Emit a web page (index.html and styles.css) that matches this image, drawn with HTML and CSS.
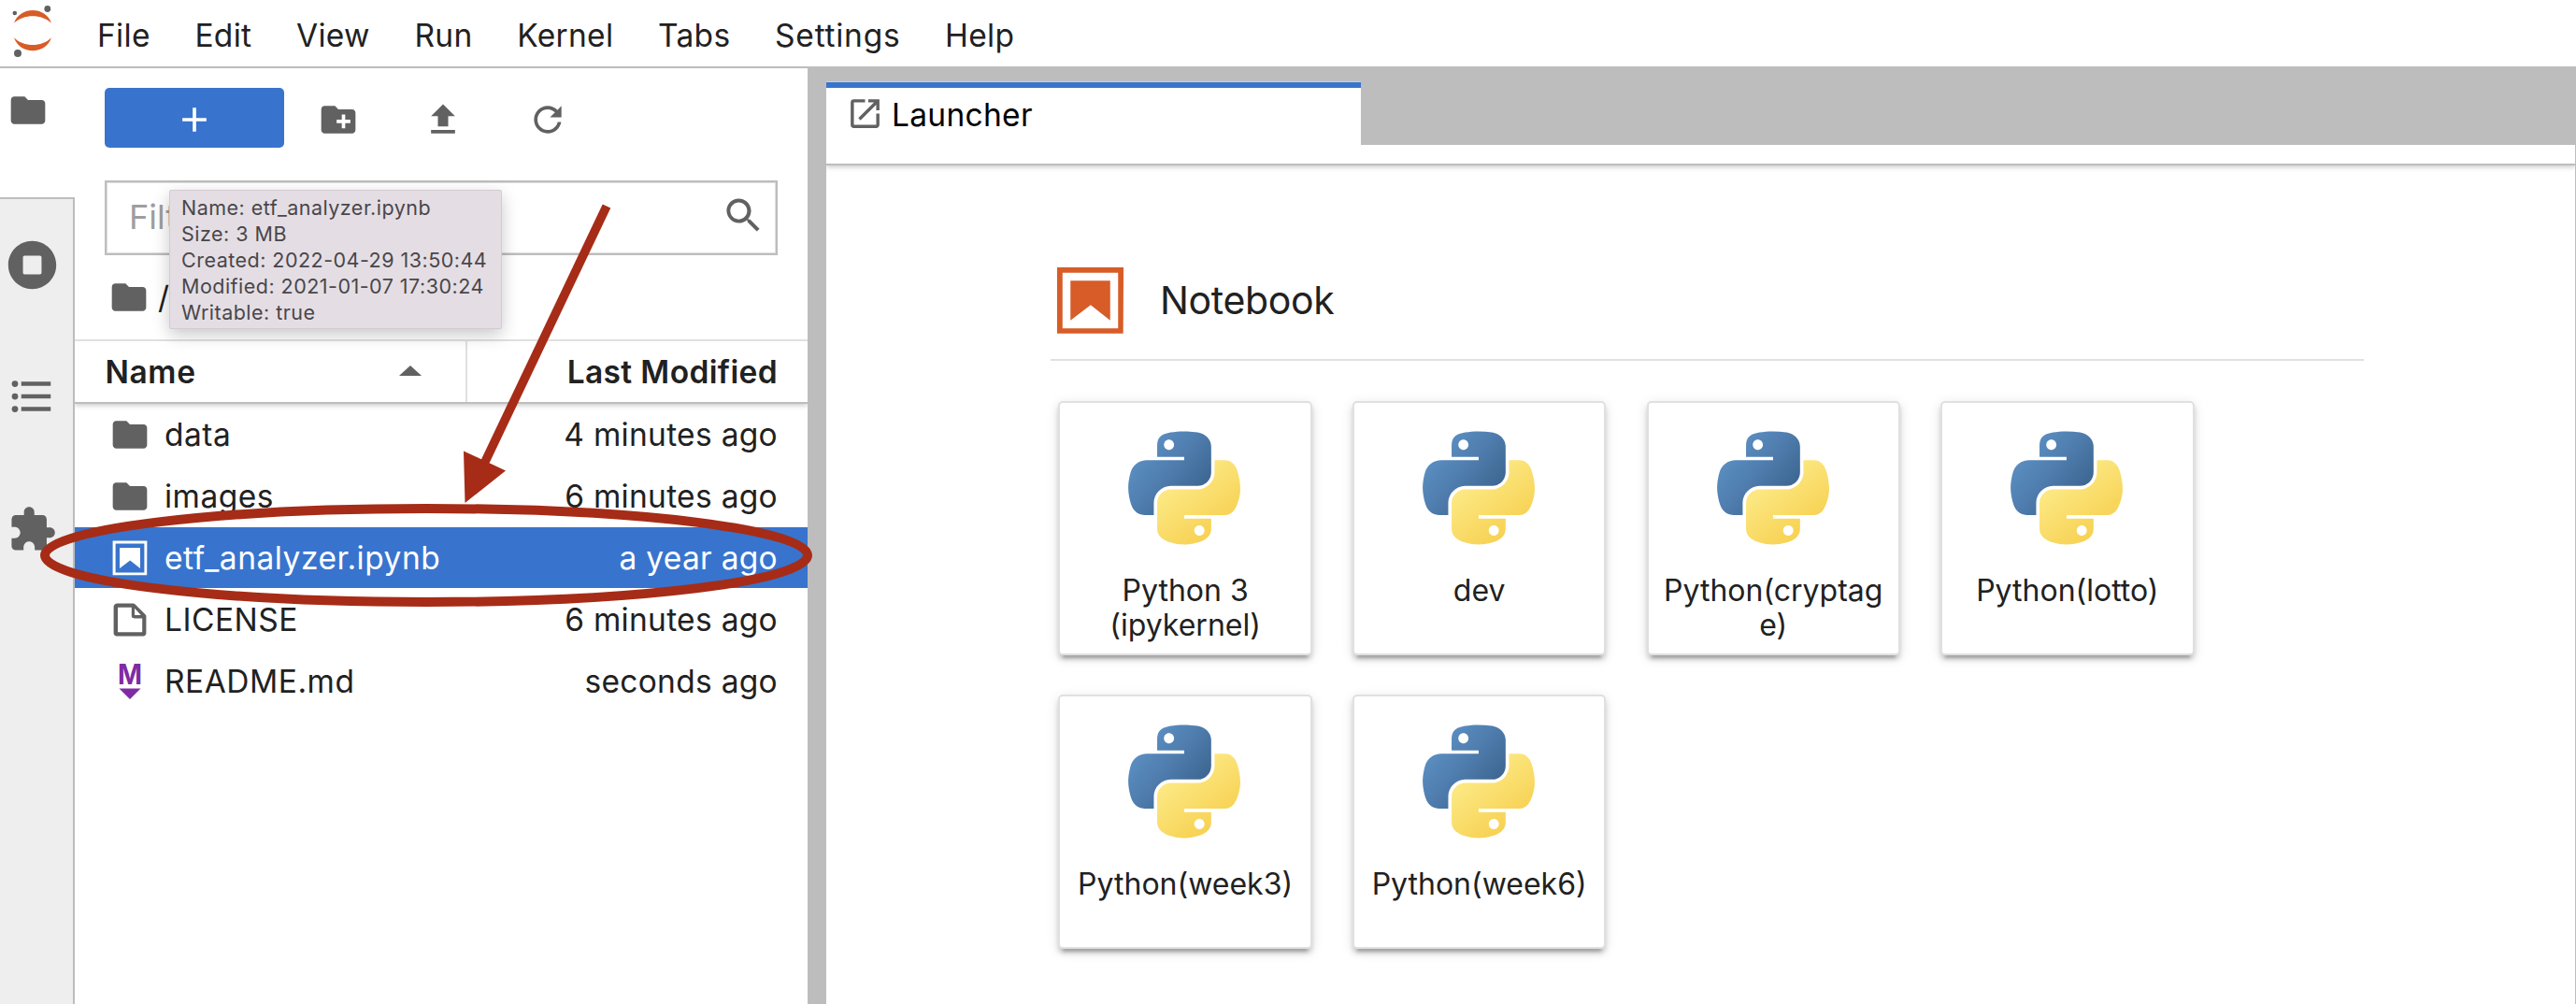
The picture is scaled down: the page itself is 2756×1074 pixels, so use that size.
FILE: index.html
```html
<!DOCTYPE html>
<html lang="en">
<head>
<meta charset="utf-8">
<title>JupyterLab</title>
<link rel="stylesheet" href="styles.css">
</head>
<body>
<svg class="defs" width="0" height="0" aria-hidden="true">
  <defs>
    <linearGradient id="py-blue" gradientUnits="userSpaceOnUse" x1="12" y1="18" x2="78" y2="74"><stop offset="0" stop-color="#5f94c8"/><stop offset=".5" stop-color="#4f7dae"/><stop offset="1" stop-color="#3b638d"/></linearGradient>
    <linearGradient id="py-yellow" gradientUnits="userSpaceOnUse" x1="48" y1="62" x2="86" y2="112"><stop offset="0" stop-color="#fce883"/><stop offset="1" stop-color="#f7d152"/></linearGradient>
    <symbol id="folder" viewBox="0 0 24 24"><path d="M10 4H4c-1.1 0-1.99.9-1.99 2L2 18c0 1.1.9 2 2 2h16c1.1 0 2-.9 2-2V8c0-1.1-.9-2-2-2h-8l-2-2z"/></symbol>
    <symbol id="notebook" viewBox="0 0 22 22"><path d="M18.7 3.3v15.4H3.3V3.3h15.4m1.5-1.5H1.8v18.3h18.3l.1-18.3z"/><path d="M16.5 16.5l-5.4-4.3-5.6 4.3v-11h11z"/></symbol>
    <symbol id="python" viewBox="5.5 6.4 111.3 112.4"><path fill="url(#py-blue)" d="M60.51 6.398C55.93 6.419 51.55 6.81 47.7 7.492 36.35 9.496 34.29 13.69 34.29 21.43v10.22h26.81v3.406H24.23c-7.79 0-14.62 4.684-16.75 13.59-2.46 10.21-2.57 16.59 0 27.25 1.91 7.938 6.46 13.59 14.25 13.59h9.22v-12.25c0-8.85 7.66-16.66 16.75-16.66h26.78c7.46 0 13.41-6.14 13.41-13.62V21.43c0-7.266-6.13-12.72-13.41-13.94-4.6-.767-9.38-1.115-13.97-1.094zM46.01 14.62c2.77 0 5.03 2.298 5.03 5.125 0 2.816-2.26 5.094-5.03 5.094-2.78 0-5.03-2.278-5.03-5.094 0-2.827 2.25-5.125 5.03-5.125z"/><path fill="url(#py-yellow)" d="M91.23 35.05v11.91c0 9.23-7.83 17-16.75 17H47.7c-7.34 0-13.41 6.28-13.41 13.63v25.53c0 7.266 6.32 11.54 13.41 13.62 8.49 2.496 16.63 2.947 26.78 0 6.75-1.954 13.41-5.887 13.41-13.62V92.9H61.1v-3.406h40.19c7.79 0 10.7-5.436 13.41-13.59 2.8-8.399 2.68-16.48 0-27.25-1.93-7.757-5.6-13.59-13.41-13.59zM76.17 99.71c2.78 0 5.03 2.278 5.03 5.094 0 2.826-2.25 5.125-5.03 5.125-2.77 0-5.03-2.299-5.03-5.125 0-2.816 2.26-5.094 5.03-5.094z"/></symbol>
  </defs>
</svg>

<header class="menubar">
  <svg class="logo" viewBox="0 0 70 70"><g fill="#d75c27"><path d="M15 24.8C21 6.4 49 6.4 55 24.8 45 14.6 25 14.6 15 24.8z"/><path d="M15 40.2C21 58.8 49 58.8 55 40.2 45 50.6 25 50.6 15 40.2z"/></g><g fill="#616161"><circle cx="50.8" cy="9.5" r="3.4"/><circle cx="15.8" cy="14" r="2.3"/><circle cx="19" cy="57" r="4"/></g></svg>
  <nav class="menus">
    <span>File</span><span>Edit</span><span>View</span><span>Run</span><span>Kernel</span><span>Tabs</span><span class="wide">Settings</span><span>Help</span>
  </nav>
</header>

<div class="workspace">
  <aside class="activity">
    <div class="act act-current"><svg viewBox="0 0 24 24" class="i44"><use href="#folder"/></svg></div>
    <div class="act act-rest">
      <svg class="i-stop" viewBox="0 0 512 512"><path d="M256 8C119 8 8 119 8 256s111 248 248 248 248-111 248-248S393 8 256 8zm96 328c0 8.800-7.200 16-16 16H176c-8.800 0-16-7.200-16-16V176c0-8.800 7.200-16 16-16h160c8.800 0 16 7.200 16 16v160z"/></svg>
      <svg class="i-toc" viewBox="0 0 24 24"><path d="M7 5h14v2H7zM7 11h14v2H7zM7 17h14v2H7z"/><circle cx="4" cy="6" r="1.5"/><circle cx="4" cy="12" r="1.500"/><circle cx="4" cy="18" r="1.500"/></svg>
      <svg class="i-ext" viewBox="0 0 24 24"><path d="M20.500 11H19V7c0-1.100-.9-2-2-2h-4V3.500C13 2.120 11.880 1 10.500 1S8 2.120 8 3.500V5H4c-1.100 0-1.990.9-1.990 2v3.800H3.500c1.490 0 2.700 1.210 2.700 2.700s-1.210 2.700-2.700 2.700H2V20c0 1.100.9 2 2 2h3.800v-1.500c0-1.490 1.210-2.700 2.700-2.700 1.490 0 2.700 1.210 2.700 2.700V22H17c1.100 0 2-.9 2-2v-4h1.500c1.380 0 2.500-1.120 2.500-2.500S21.880 11 20.500 11z"/></svg>
    </div>
  </aside>

  <section class="browser">
    <div class="toolbar">
      <button class="new"><svg class="i44" viewBox="0 0 24 24"><path fill="#fff" d="M19 13h-6v6h-2v-6H5v-2h6V5h2v6h6v2z"/></svg></button>
      <svg class="i44" viewBox="0 0 24 24"><path d="M20 6h-8l-2-2H4c-1.110 0-1.990.89-1.990 2L2 18c0 1.110.89 2 2 2h16c1.110 0 2-.89 2-2V8c0-1.110-.89-2-2-2zm-1 8h-3v3h-2v-3h-3v-2h3V9h2v3h3v2z"/></svg>
      <svg class="i44" viewBox="0 0 24 24"><path d="M9 16h6v-6h4l-7-7-7 7h4zm-4 2h14v2H5z"/></svg>
      <svg class="i44" viewBox="0 0 18 18"><path d="M9 13.500c-2.490 0-4.500-2.010-4.500-4.500S6.510 4.500 9 4.500c1.240 0 2.360.52 3.170 1.330L10 8h5V3l-1.760 1.760C12.150 3.680 10.660 3 9 3 5.690 3 3.010 5.690 3.010 9S5.690 15 9 15c2.970 0 5.430-2.160 5.900-5h-1.520c-.46 2-2.240 3.500-4.380 3.500z"/></svg>
    </div>
    <div class="filter"><span>Filt</span>
      <svg class="i44" viewBox="0 0 18 18"><path d="M12.100 10.900h-.7l-.2-.2c.8-.9 1.300-2.200 1.300-3.500 0-3-2.400-5.400-5.400-5.400S1.800 4.200 1.800 7.100s2.400 5.400 5.400 5.400c1.300 0 2.500-.5 3.500-1.300l.2.2v.7l4.100 4.100 1.200-1.200-4.100-4.100zm-5 0c-2.100 0-3.700-1.700-3.700-3.700s1.700-3.700 3.700-3.700 3.700 1.700 3.700 3.700-1.600 3.700-3.700 3.700z"/></svg>
    </div>
    <div class="crumbs"><svg class="i44" viewBox="0 0 24 24"><use href="#folder"/></svg><span>/</span></div>
    <div class="thead">
      <div class="th-name">Name<svg viewBox="0 0 24 11"><path d="M0 11 12 0l12 11z"/></svg></div>
      <div class="th-date">Last Modified</div>
    </div>
    <div class="rows">
      <div class="row"><svg class="i44" viewBox="0 0 24 24"><use href="#folder"/></svg><span class="name">data</span><span class="date">4 minutes ago</span></div>
      <div class="row"><svg class="i44" viewBox="0 0 24 24"><use href="#folder"/></svg><span class="name">images</span><span class="date">6 minutes ago</span></div>
      <div class="row selected"><svg class="i44" viewBox="0 0 22 22"><use href="#notebook"/></svg><span class="name">etf_analyzer.ipynb</span><span class="date">a year ago</span></div>
      <div class="row"><svg class="i44" viewBox="0 0 22 22"><path d="M19.300 8.200l-5.500-5.500c-.3-.3-.7-.5-1.200-.5H3.900c-.8.1-1.600.9-1.600 1.800v14.100c0 .9.7 1.600 1.600 1.600h14.200c.9 0 1.600-.7 1.600-1.600V9.400c.1-.5-.1-.9-.4-1.200zm-5.800-3.300l3.400 3.600h-3.400V4.900zm3.900 12.700H4.700c-.1 0-.2 0-.2-.2V4.700c0-.2.1-.3.2-.3h7.200v4.400s0 .8.3 1.100c.3.3 1.100.3 1.100.3h4.300v7.200s-.1.2-.2.2z"/></svg><span class="name">LICENSE</span><span class="date">6 minutes ago</span></div>
      <div class="row"><svg class="i44 md" viewBox="0 0 44 44"><text x="22" y="24.500" text-anchor="middle" textLength="26" lengthAdjust="spacingAndGlyphs">M</text><path d="M10.500 29.500h23L22 41z"/></svg><span class="name">README.md</span><span class="date">seconds ago</span></div>
    </div>
  </section>

  <main class="dock">
    <div class="tabbar"><div class="tab"><svg viewBox="0 0 24 24"><path d="M19 19H5V5h7V3H5a2 2 0 00-2 2v14a2 2 0 002 2h14c1.100 0 2-.9 2-2v-7h-2v7zM14 3v2h3.590l-9.830 9.830 1.410 1.410L19 6.410V10h2V3h-7z"/></svg>Launcher</div></div>
    <div class="tabline"></div>
    <div class="launcher">
      <h2><svg viewBox="0 0 22 22"><use href="#notebook"/></svg>Notebook</h2>
      <div class="cards">
        <div class="card"><svg viewBox="0 0 120 122"><use href="#python"/></svg><p>Python 3 (ipykernel)</p></div>
        <div class="card"><svg viewBox="0 0 120 122"><use href="#python"/></svg><p>dev</p></div>
        <div class="card"><svg viewBox="0 0 120 122"><use href="#python"/></svg><p>Python(cryptage)</p></div>
        <div class="card"><svg viewBox="0 0 120 122"><use href="#python"/></svg><p>Python(lotto)</p></div>
        <div class="card"><svg viewBox="0 0 120 122"><use href="#python"/></svg><p>Python(week3)</p></div>
        <div class="card"><svg viewBox="0 0 120 122"><use href="#python"/></svg><p>Python(week6)</p></div>
      </div>
    </div>
  </main>
</div>

<div class="tooltip">Name: etf_analyzer.ipynb<br>Size: 3 MB<br>Created: 2022-04-29 13:50:44<br>Modified: 2021-01-07 17:30:24<br>Writable: true</div>

<svg class="annotation" viewBox="0 0 900 680">
  <ellipse cx="456" cy="594" rx="408" ry="50" fill="none" stroke="#a62c17" stroke-width="10"/>
  <path d="M649 220.500 518 496" stroke="#a62c17" stroke-width="9.500"/>
  <path d="M496 482.500 541 503.500 497.500 538z" fill="#a62c17"/>
</svg>
</body>
</html>
```
FILE: styles.css
```css
* { box-sizing: border-box; }

body {
  margin: 0;
  width: 2756px;
  height: 1074px;
  overflow: hidden;
  position: relative;
  display: flex;
  flex-direction: column;
  background: #fff;
  color: #212121;
  font: 33.5px/40px Inter, "Liberation Sans", sans-serif;
}

svg { fill: #616161; display: block; flex: none; }
.defs { position: absolute; }
.i44 { width: 44px; height: 44px; }

/* Menu bar */
.menubar {
  flex: none;
  display: flex;
  height: 73px;
  border-bottom: 2px solid #bdbdbd;
}
.logo { width: 70px; height: 70px; }
.menus {
  display: flex;
  align-items: center;
  gap: 47.7px;
  padding: 4px 0 0 34px;
  letter-spacing: .3px;
}
.menus .wide { letter-spacing: .75px; }

.workspace { flex: 1; display: flex; min-height: 0; }

/* Activity bar */
.activity { width: 80px; flex: none; display: flex; flex-direction: column; }
.act-current { height: 138px; padding: 23px 0 0 8px; }
.act-rest {
  flex: 1;
  background: #eee;
  border-top: 2px solid #bdbdbd;
  border-right: 2px solid #bdbdbd;
  display: flex;
  flex-direction: column;
}
.i-stop { width: 53px; height: 53px; margin: 44px 0 0 8px; }
.i-toc { width: 54px; height: 54px; margin: 87px 0 0 7px; }
.i-ext { width: 53px; height: 53px; margin: 89px 0 0 8px; }

/* File browser */
.browser { width: 784px; flex: none; display: flex; flex-direction: column; }
.toolbar {
  display: flex;
  align-items: center;
  gap: 68px;
  padding: 21px 0 0 32px;
}
.toolbar svg { margin-top: 3px; }
.new {
  width: 192px;
  height: 64px;
  margin-right: -32px;
  padding: 0;
  border: 0;
  border-radius: 5px;
  background: #3874cd;
  display: flex;
  align-items: center;
  justify-content: center;
}
.filter {
  height: 80px;
  margin: 35px 32px 0;
  padding: 0 13px 0 24px;
  border: 2px solid #bdbdbd;
  box-shadow: inset 0 0 0 1px #dedede;
  display: flex;
  align-items: center;
  justify-content: space-between;
  color: #9e9e9e;
  font-size: 36px;
}
.filter span { margin-top: -2px; }
.filter svg { margin-top: -6px; }
.crumbs {
  height: 90px;
  padding: 0 0 0 36px;
  display: flex;
  align-items: center;
  gap: 9px;
}
.crumbs svg { margin-top: -1px; }
.thead {
  flex: none;
  height: 69px;
  display: flex;
  border-top: 2px solid #e0e0e0;
  border-bottom: 2px solid #bdbdbd;
  box-shadow: 0 2px 5px rgba(0, 0, 0, .2);
  clip-path: inset(0 0 -12px 0);
  font-weight: 600;
}
.th-name {
  width: 420px;
  border-right: 2px solid #e0e0e0;
  padding: 1px 47px 0 32.5px;
  display: flex;
  align-items: center;
  justify-content: space-between;
  letter-spacing: .6px;
}
.th-name svg { width: 24px; height: 11px; margin-top: -3px; }
.th-date {
  flex: 1;
  padding: 13px 32px 0 0;
  text-align: right;
  letter-spacing: .37px;
}
.row {
  height: 66px;
  padding: 0 32px 0 37px;
  display: flex;
  align-items: center;
}
.name { margin-left: 15px; letter-spacing: .5px; }
.date { margin-left: auto; letter-spacing: .3px; }
.selected {
  background: #3874cd;
  box-shadow: inset 0 -1px #fff;
  color: #fff;
}
.selected svg { fill: #fff; }
.md { fill: #7f2ba3; overflow: visible; }
.md text { font: 700 30px/36px Inter, sans-serif; }

/* Main dock */
.dock {
  flex: 1;
  min-width: 0;
  display: flex;
  flex-direction: column;
  border-left: 20px solid #bdbdbd;
  border-right: 1px solid #bdbdbd;
}
.tabbar { height: 82px; background: #bdbdbd; padding-top: 15px; flex: none; }
.tab {
  width: 572px;
  height: 67px;
  padding: 0 0 4px 21px;
  border-top: 6px solid #3874cd;
  box-shadow: 0 -1px #d0d0d0;
  background: #fff;
  color: #000;
  display: flex;
  align-items: center;
  gap: 8px;
  letter-spacing: .3px;
}
.tab svg { width: 41px; height: 41px; margin-top: -3px; }
.tabline {
  flex: none;
  height: 22px;
  border-bottom: 2px solid #bdbdbd;
  box-shadow: 0 2px 5px rgba(0, 0, 0, .2);
  clip-path: inset(0 0 -12px 0);
}
.launcher { width: 1405px; margin-left: 240px; padding-top: 102px; }
.launcher h2 {
  margin: 0;
  height: 107px;
  display: flex;
  align-items: flex-start;
  gap: 32px;
  border-bottom: 2px solid #e0e0e0;
  font-size: 41px;
  font-weight: 400;
  line-height: 85px;
  letter-spacing: -.35px;
}
.launcher h2 svg { width: 85px; height: 85px; fill: #d75c27; }
.cards {
  display: grid;
  grid-template-columns: repeat(4, 271.4px);
  gap: 42px 43.2px;
  padding: 43px 0 0 8.4px;
}
.card {
  height: 272px;
  border: 2px solid #e0e0e0;
  border-radius: 5px;
  padding: 30px 12px 0;
  box-shadow: 0 8px 3px -5px rgba(0, 0, 0, .2), 0 5px 5px rgba(0, 0, 0, .14), 0 3px 13px rgba(0, 0, 0, .12);
  background: #fff;
}
.card svg { width: 120px; height: 122px; margin: 0 0 0 61px; }
.card p {
  margin: 30px 0 0;
  font-size: 32px;
  line-height: 37px;
  text-align: center;
  overflow-wrap: anywhere;
}

/* Hover tooltip and callout marks lie over the page */
.tooltip {
  position: absolute;
  left: 181px;
  top: 203px;
  width: 356px;
  height: 149px;
  padding: 4px 0 0 12px;
  background: #e4dee4;
  border: 1px solid #d2ccd2;
  border-radius: 2px;
  box-shadow: 0 6px 18px rgba(0, 0, 0, .22);
  color: #4a464a;
  font-size: 21.5px;
  line-height: 28px;
  letter-spacing: .48px;
  white-space: nowrap;
}
.annotation { position: absolute; left: 0; top: 0; width: 900px; height: 680px; }
```
